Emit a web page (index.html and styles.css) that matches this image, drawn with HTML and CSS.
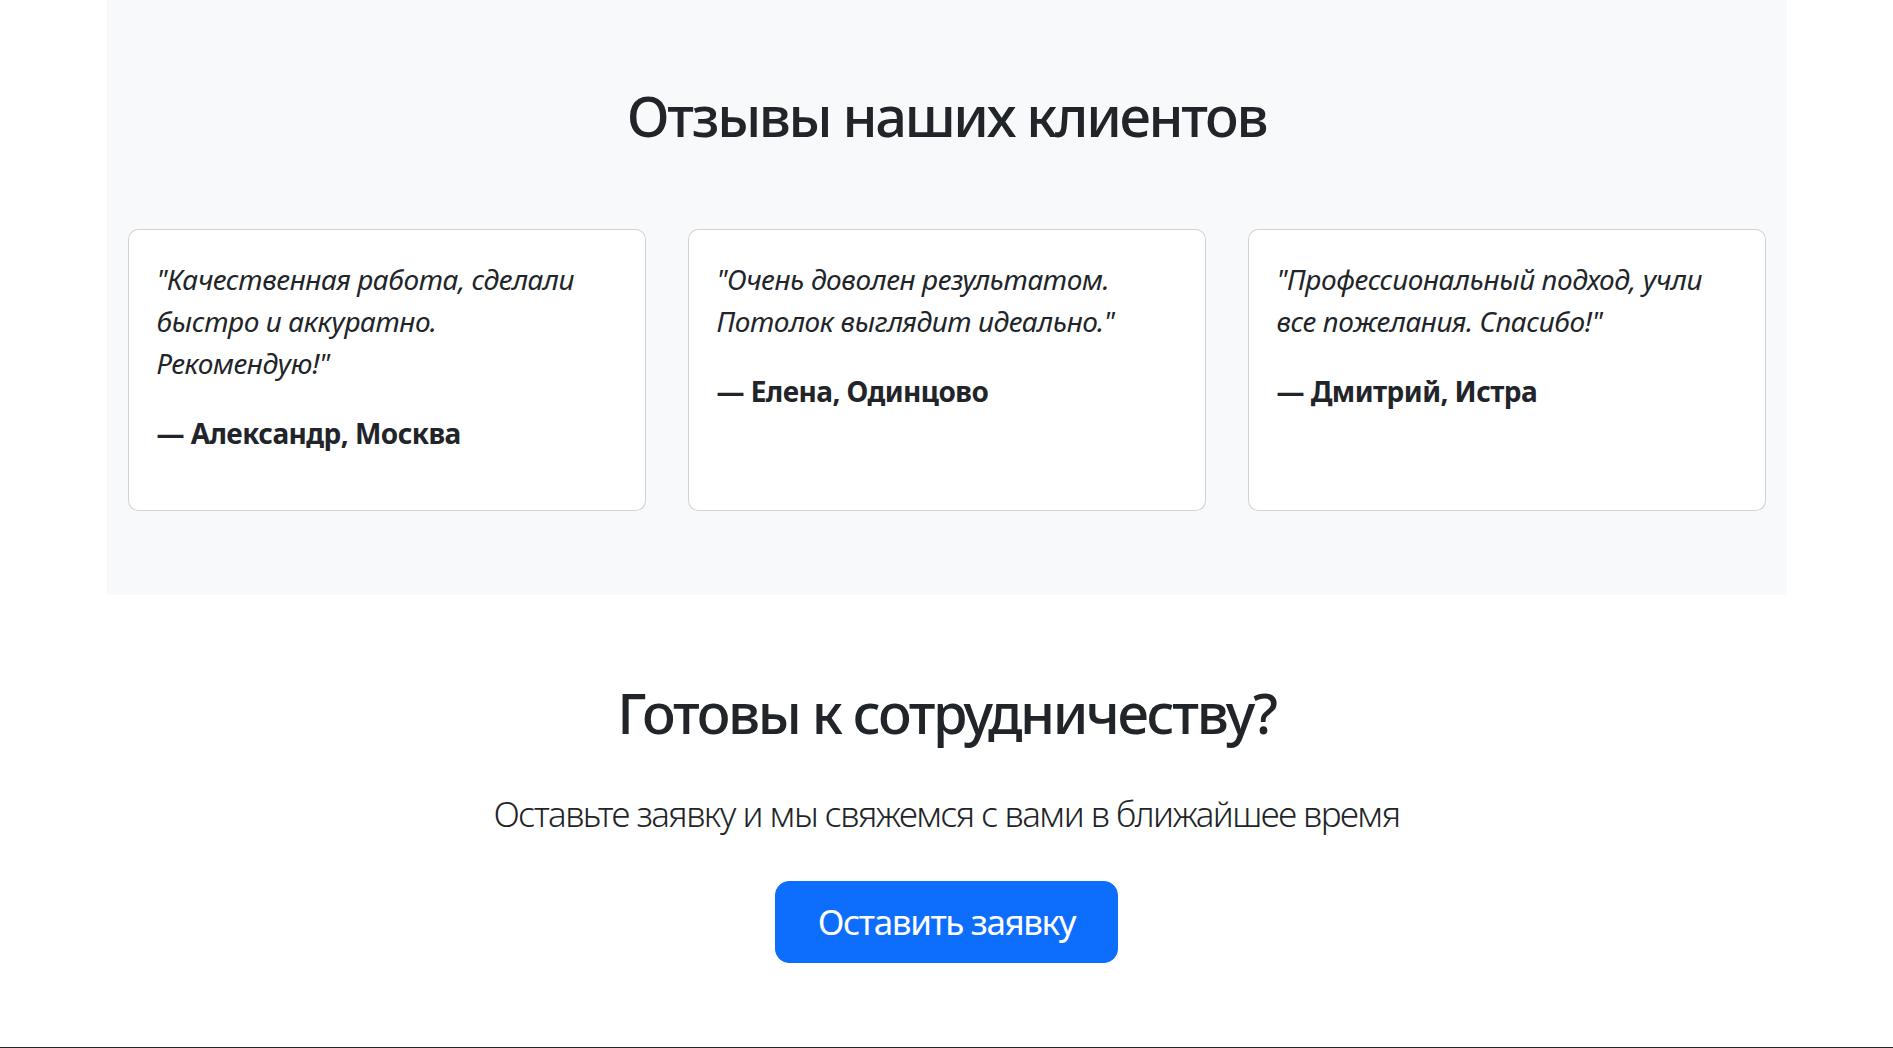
FILE: index.html
```html
<!DOCTYPE html>
<html lang="ru">
<head>
<meta charset="utf-8">
<title>Отзывы</title>
<link rel="stylesheet" href="styles.css">
</head>
<body>
<section class="reviews">
  <h2 class="section-title">Отзывы наших клиентов</h2>
  <div class="cards">
    <div class="card">
      <p class="quote">"Качественная работа, сделали быстро и аккуратно. Рекомендую!"</p>
      <p class="author">— Александр, Москва</p>
    </div>
    <div class="card">
      <p class="quote">"Очень доволен результатом. Потолок выглядит идеально."</p>
      <p class="author">— Елена, Одинцово</p>
    </div>
    <div class="card">
      <p class="quote">"Профессиональный подход, учли все пожелания. Спасибо!"</p>
      <p class="author">— Дмитрий, Истра</p>
    </div>
  </div>
</section>
<section class="cta">
  <h2 class="cta-title">Готовы к сотрудничеству?</h2>
  <p class="lead">Оставьте заявку и мы свяжемся с вами в ближайшее время</p>
  <a class="btn" href="#">Оставить заявку</a>
</section>
<footer class="footer"></footer>
</body>
</html>
```
FILE: styles.css
```css
* { box-sizing: border-box; }
html, body { margin: 0; padding: 0; }
body {
  font-family: "Noto Sans", "Open Sans", sans-serif;
  color: #212529;
  background: #fff;
  font-size: 28px;
  line-height: 1.5;
}
.reviews {
  width: 1680px;
  margin: 0 auto;
  background: #f8f9fa;
  padding: 82px 21px 84px;
}
.section-title, .cta-title {
  margin: 0;
  font-size: 56px;
  font-weight: 500;
  line-height: 1.2;
  text-align: center;
  letter-spacing: -0.042em;
}
.section-title { margin-bottom: 80px; }
.cards {
  display: grid;
  grid-template-columns: repeat(3, 1fr);
  gap: 42px;
}
.card {
  background: #fff;
  border: 1.75px solid rgba(0,0,0,.175);
  border-radius: 10.5px;
  padding: 28px;
}
.card p { margin: 0 0 28px; }
.quote { font-style: italic; letter-spacing: -0.014em; }
.author { font-weight: 700; letter-spacing: -0.02em; }
.cta {
  width: 1680px;
  margin: 0 auto;
  padding: 84px 21px;
  text-align: center;
}
.cta-title { margin-bottom: 42px; }
.lead {
  margin: 0 0 40px;
  font-size: 35px;
  font-weight: 300;
  letter-spacing: -0.043em;
}
.btn {
  display: inline-block;
  background: #0d6efd;
  color: #fff;
  text-decoration: none;
  font-size: 35px;
  line-height: 1.5;
  padding: 14px 42px;
  border-radius: 14px;
  border: 1.75px solid #0d6efd;
  letter-spacing: -0.04em;
}
.footer {
  background: #212529;
  height: 40px;
}
```
